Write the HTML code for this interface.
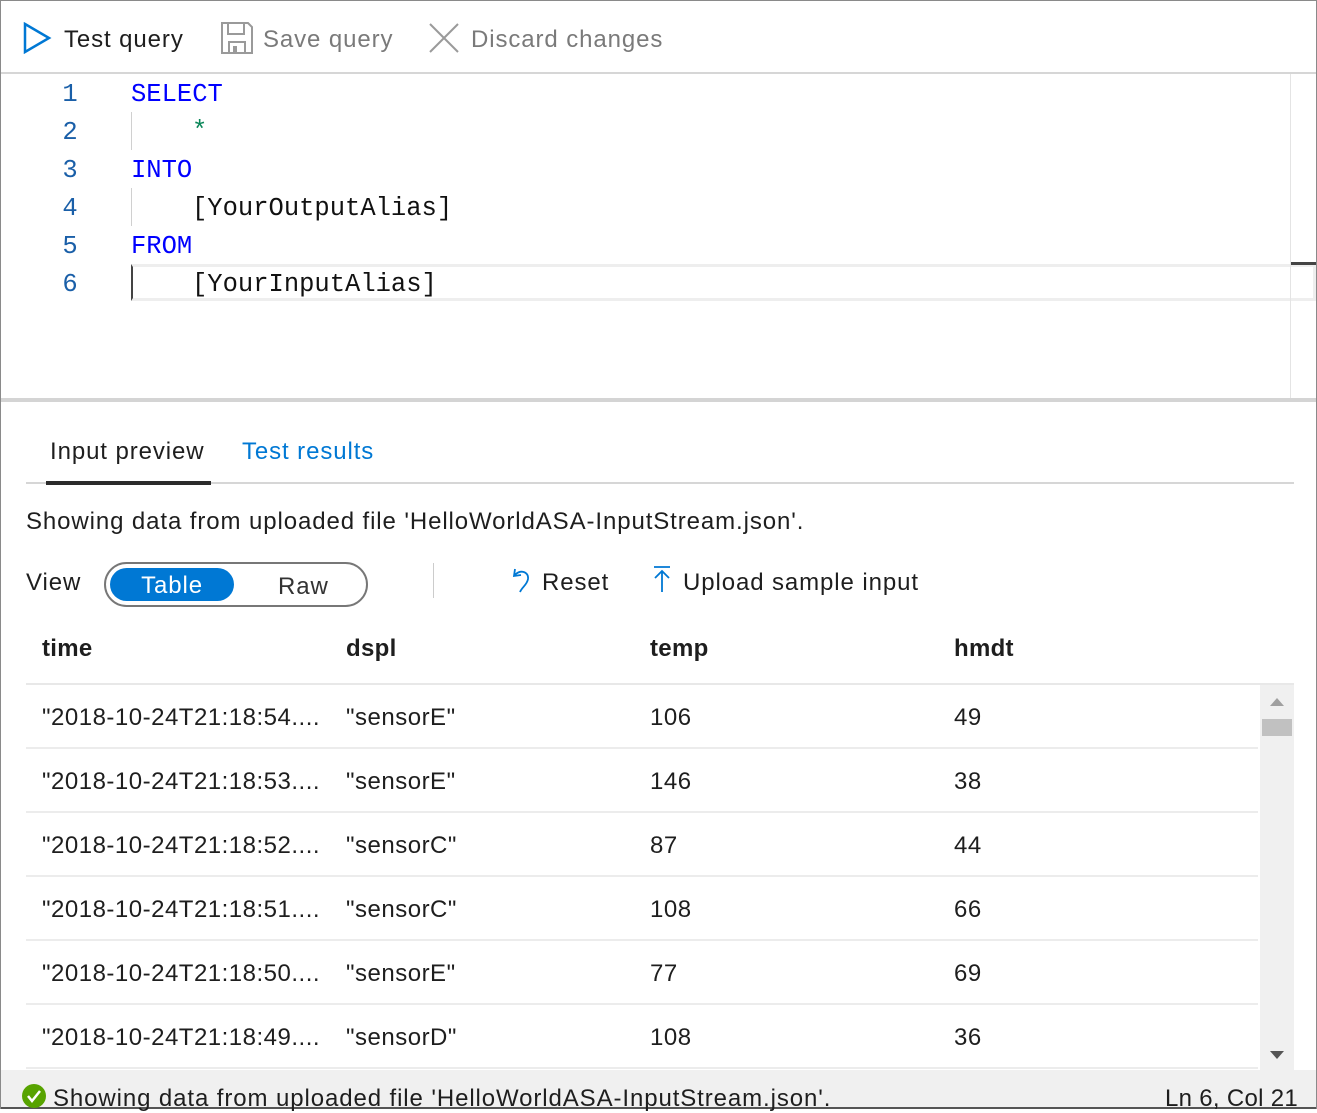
<!DOCTYPE html>
<html><head><meta charset="utf-8"><style>
*{margin:0;padding:0;box-sizing:border-box}
body{width:1317px;height:1109px;position:relative;overflow:hidden;background:#fff;font-family:"Liberation Sans",sans-serif;color:#1e1e1e}
.a{position:absolute;white-space:nowrap}
.t{font-size:24px;line-height:28px;letter-spacing:0.9px}
.m{font-family:"Liberation Mono",monospace;font-size:25.5px;line-height:30px}
.ln{color:#1a5fa8;width:30px;text-align:center;left:55px}
.kw{color:#0000ff}
.row{position:absolute;left:26px;width:1232px;height:64px;border-bottom:2px solid #ececec;background:#fff}
.row span{position:absolute;top:19px;font-size:24px;line-height:28px;letter-spacing:0.5px}
.h{font-weight:bold;letter-spacing:0.3px}
</style></head><body>
<div class="a" style="left:0;top:0;width:1317px;height:1109px;border:1px solid #8a8a8a;border-bottom:none"></div>
<svg class="a" style="left:22px;top:22px" width="30" height="32" viewBox="0 0 30 32"><path d="M3 2 L27 16 L3 30 Z" fill="none" stroke="#0078d4" stroke-width="2.5"/></svg>
<div class="a t" style="left:64px;top:26px">Test query</div>
<svg class="a" style="left:220px;top:21px" width="34" height="34" viewBox="0 0 34 34"><path d="M2 2 H28 L32 6 V32 H2 Z" fill="none" stroke="#9a9a9a" stroke-width="2"/><rect x="8" y="2" width="16" height="11" fill="none" stroke="#9a9a9a" stroke-width="2"/><rect x="9" y="21" width="16" height="11" fill="none" stroke="#9a9a9a" stroke-width="2"/><rect x="13" y="25" width="4" height="7" fill="#9a9a9a"/></svg>
<div class="a t" style="left:263px;top:26px;color:#7a7a7a">Save query</div>
<svg class="a" style="left:428px;top:22px" width="32" height="32" viewBox="0 0 32 32"><path d="M2 2 L30 30 M30 2 L2 30" stroke="#9a9a9a" stroke-width="2"/></svg>
<div class="a t" style="left:471px;top:26px;color:#7a7a7a">Discard changes</div>
<div class="a" style="left:1px;top:72px;width:1315px;height:2px;background:#d6d6d6"></div>
<div class="a" style="left:131px;top:112px;width:1px;height:38px;background:#d0d0d0"></div>
<div class="a" style="left:131px;top:188px;width:1px;height:38px;background:#d0d0d0"></div>
<div class="a" style="left:131px;top:264px;width:1185px;height:37px;border:3px solid #eeeeee;border-left:2px solid #444"></div>
<div class="a" style="left:1290px;top:74px;width:1px;height:325px;background:#e4e4e4"></div>
<div class="a" style="left:1291px;top:262px;width:25px;height:3px;background:#444"></div>
<div class="a m ln" style="top:80px">1</div><div class="a m kw" style="left:131px;top:80px">SELECT</div>
<div class="a m ln" style="top:118px">2</div><div class="a m" style="left:192px;top:117px;color:#098658">*</div>
<div class="a m ln" style="top:156px">3</div><div class="a m kw" style="left:131px;top:156px">INTO</div>
<div class="a m ln" style="top:194px">4</div><div class="a m" style="left:192px;top:194px;color:#111">[YourOutputAlias]</div>
<div class="a m ln" style="top:232px">5</div><div class="a m kw" style="left:131px;top:232px">FROM</div>
<div class="a m ln" style="top:270px">6</div><div class="a m" style="left:192px;top:270px;color:#111">[YourInputAlias]</div>
<div class="a" style="left:1px;top:398px;width:1315px;height:4px;background:#d4d4d4"></div>
<div class="a t" style="left:50px;top:438px">Input preview</div>
<div class="a t" style="left:242px;top:438px;color:#0078d4">Test results</div>
<div class="a" style="left:26px;top:482px;width:1268px;height:2px;background:#d6d6d6"></div>
<div class="a" style="left:46px;top:481px;width:165px;height:4px;background:#2b2b2b"></div>
<div class="a t" style="left:26px;top:508px">Showing data from uploaded file 'HelloWorldASA-InputStream.json'.</div>
<div class="a t" style="left:26px;top:569px">View</div>
<div class="a" style="left:104px;top:562px;width:264px;height:45px;border:2px solid #777;border-radius:23px"></div>
<div class="a" style="left:110px;top:568px;width:124px;height:33px;background:#0078d4;border-radius:17px"></div>
<div class="a t" style="left:110px;top:572px;width:124px;text-align:center;color:#fff">Table</div>
<div class="a t" style="left:278px;top:573px;color:#333">Raw</div>
<div class="a" style="left:433px;top:563px;width:1px;height:35px;background:#ccc"></div>
<svg class="a" style="left:511px;top:566px" width="22" height="28" viewBox="0 0 22 28"><path d="M4 3 L3 10 L10 9 M3 10 C8 3 18 5 17 13 C16 19 11 21 9 26" fill="none" stroke="#0078d4" stroke-width="1.8"/></svg>
<div class="a t" style="left:542px;top:569px">Reset</div>
<svg class="a" style="left:652px;top:565px" width="20" height="28" viewBox="0 0 20 28"><path d="M2 2 H18 M10 6 V27 M3 13 L10 6 L17 13" fill="none" stroke="#0078d4" stroke-width="1.8"/></svg>
<div class="a t" style="left:683px;top:569px">Upload sample input</div>
<div class="a t h" style="left:42px;top:635px">time</div>
<div class="a t h" style="left:346px;top:635px">dspl</div>
<div class="a t h" style="left:650px;top:635px">temp</div>
<div class="a t h" style="left:954px;top:635px">hmdt</div>
<div class="a" style="left:26px;top:683px;width:1268px;height:2px;background:#e8e8e8"></div>
<div class="row" style="top:685px"><span style="left:16px">"2018-10-24T21:18:54....</span><span style="left:320px">"sensorE"</span><span style="left:624px">106</span><span style="left:928px">49</span></div>
<div class="row" style="top:749px"><span style="left:16px">"2018-10-24T21:18:53....</span><span style="left:320px">"sensorE"</span><span style="left:624px">146</span><span style="left:928px">38</span></div>
<div class="row" style="top:813px"><span style="left:16px">"2018-10-24T21:18:52....</span><span style="left:320px">"sensorC"</span><span style="left:624px">87</span><span style="left:928px">44</span></div>
<div class="row" style="top:877px"><span style="left:16px">"2018-10-24T21:18:51....</span><span style="left:320px">"sensorC"</span><span style="left:624px">108</span><span style="left:928px">66</span></div>
<div class="row" style="top:941px"><span style="left:16px">"2018-10-24T21:18:50....</span><span style="left:320px">"sensorE"</span><span style="left:624px">77</span><span style="left:928px">69</span></div>
<div class="row" style="top:1005px"><span style="left:16px">"2018-10-24T21:18:49....</span><span style="left:320px">"sensorD"</span><span style="left:624px">108</span><span style="left:928px">36</span></div>
<div class="a" style="left:1260px;top:685px;width:34px;height:385px;background:#f0f0f0"></div>
<div class="a" style="left:1270px;top:698px;width:0;height:0;border-left:7px solid transparent;border-right:7px solid transparent;border-bottom:8px solid #a0a0a0"></div>
<div class="a" style="left:1262px;top:719px;width:30px;height:17px;background:#c1c1c1"></div>
<div class="a" style="left:1270px;top:1051px;width:0;height:0;border-left:7px solid transparent;border-right:7px solid transparent;border-top:8px solid #555"></div>
<div class="a" style="left:1px;top:1070px;width:1315px;height:39px;background:#f0f0f0;border-bottom:2px solid #555"></div>
<svg class="a" style="left:21px;top:1083px" width="26" height="26" viewBox="0 0 26 26"><circle cx="13" cy="13" r="12" fill="#57a300"/><path d="M7 13 L11 18 L19 8" fill="none" stroke="#fff" stroke-width="2.5"/></svg>
<div class="a t" style="left:53px;top:1085px">Showing data from uploaded file 'HelloWorldASA-InputStream.json'.</div>
<div class="a t" style="left:1165px;top:1085px;letter-spacing:0.3px">Ln 6, Col 21</div>
</body></html>
